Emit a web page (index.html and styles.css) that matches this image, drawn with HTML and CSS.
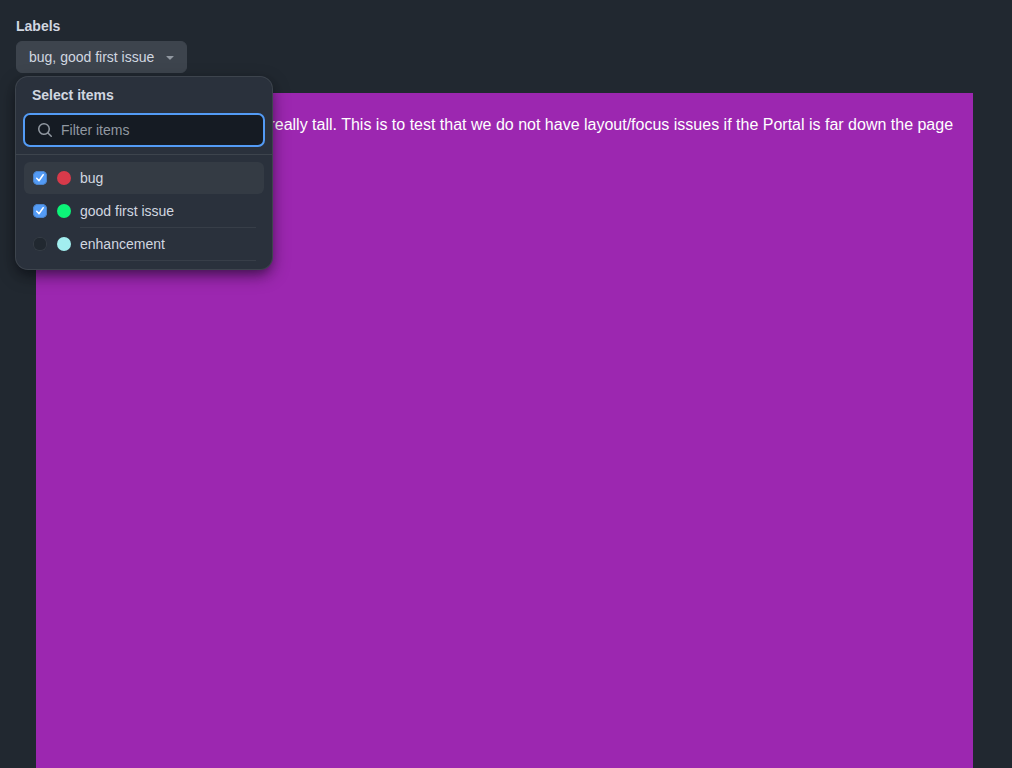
FILE: index.html
```html
<!DOCTYPE html>
<html lang="en">
<head>
<meta charset="utf-8">
<title>Labels</title>
<link rel="stylesheet" href="styles.css">
</head>
<body>
<main class="page">
  <div class="field">
    <label class="field-label">Labels</label>
    <button class="anchor" type="button">
      <span>bug, good first issue</span>
      <svg class="caret" width="16" height="16" viewBox="0 0 16 16"><path d="m4.427 7.427 3.396 3.396a.25.25 0 0 0 .354 0l3.396-3.396A.25.25 0 0 0 11.396 7H4.604a.25.25 0 0 0-.177.427Z"/></svg>
    </button>
  </div>
  <div class="tall">This element makes the body really tall. This is to test that we do not have layout/focus issues if the Portal is far down the page</div>
</main>
<section class="overlay">
  <h1 class="title">Select items</h1>
  <div class="filter">
    <svg class="search" width="16" height="16" viewBox="0 0 16 16"><path d="M10.68 11.74a6 6 0 0 1-7.922-8.982 6 6 0 0 1 8.982 7.922l3.04 3.04a.749.749 0 0 1-.326 1.275.749.749 0 0 1-.734-.215ZM11.5 7a4.499 4.499 0 1 0-8.997 0A4.499 4.499 0 0 0 11.5 7Z"/></svg>
    <span>Filter items</span>
  </div>
  <ul class="list">
    <li class="item active">
      <span class="box checked"><svg width="14" height="14" viewBox="0 0 14 14"><path d="m3.7 7.2 2.3 2.5 4.2-6"/></svg></span>
      <span class="dot red"></span><span class="text">bug</span>
    </li>
    <li class="item">
      <span class="box checked"><svg width="14" height="14" viewBox="0 0 14 14"><path d="m3.7 7.2 2.3 2.5 4.2-6"/></svg></span>
      <span class="dot green"></span><span class="text">good first issue</span>
    </li>
    <li class="item">
      <span class="box"></span>
      <span class="dot cyan"></span><span class="text">enhancement</span>
    </li>
  </ul>
</section>
</body>
</html>
```
FILE: styles.css
```css
* { box-sizing: border-box; }
html, body { height: 100%; }
body {
  margin: 0;
  overflow: hidden;
  background: #212830;
  color: #d1d7e0;
  font: 14px/20px "Liberation Sans", Arial, sans-serif;
}
.page { height: 768px; padding: 16px 16px 0; display: flex; flex-direction: column; overflow: hidden; }
.field { display: flex; flex-direction: column; align-items: flex-start; gap: 5px; }
.field-label { font-weight: 700; }
.anchor {
  display: flex; align-items: center; gap: 8px;
  height: 32px; padding: 0 8px 0 12px;
  border: 1px solid #3d444d; border-radius: 6px;
  background: #3d444d; color: #d1d7e0;
  font: inherit;
}
.caret { fill: #9198a1; }
.tall {
  flex: none;
  width: max-content; height: 2000px;
  margin: 20px; padding: 20px;
  background: #9c27b0; color: #fff;
  font-size: 16px; line-height: 24px;
}
.overlay {
  position: absolute; left: 16px; top: 77px;
  width: 256px; height: 192px;
  border-radius: 12px;
  background: #2a313c;
  box-shadow: 0 0 0 1px #3d444d, 0 6px 12px -3px rgba(1, 4, 9, .4), 0 6px 18px rgba(1, 4, 9, .4);
}
.title { margin: 0; padding: 8px 16px; font-size: 14px; line-height: 20px; }
.filter {
  display: flex; align-items: center; gap: 8px;
  height: 34px; margin: 0 7px 7px; padding: 0 12px;
  border: 2px solid #539bf5; border-radius: 7px;
  background: #151b23; color: #9198a1;
}
.search { fill: #9198a1; }
.list { margin: 0; padding: 7px 8px; list-style: none; border-top: 1px solid #3d444d; }
.item { display: flex; align-items: center; height: 33px; padding: 0 8px; }
.active { height: 32px; border-radius: 6px; background: #343b44; }
.box {
  display: flex; width: 14px; height: 14px; margin: 0 10px 0 1px;
  border-radius: 6px; background: #212830;
  box-shadow: inset 0 0 0 1px #343b44;
}
.checked { border-radius: 5px; background: #539bf5; box-shadow: inset 0 0 0 1px #4b82c8; }
.box svg { fill: none; stroke: #fff; stroke-width: 1.5; stroke-linecap: round; stroke-linejoin: round; }
.dot { width: 14px; height: 14px; border-radius: 50%; margin-right: 9px; }
.red { background: #d73a4a; }
.green { background: #0cf478; }
.cyan { background: #a2eeef; }
.text { flex: 1; align-self: flex-start; height: 34px; padding: 7px 0 0; border-bottom: 1px solid #373e48; }
.active .text { height: 32px; padding-top: 6px; border: 0; }
```
